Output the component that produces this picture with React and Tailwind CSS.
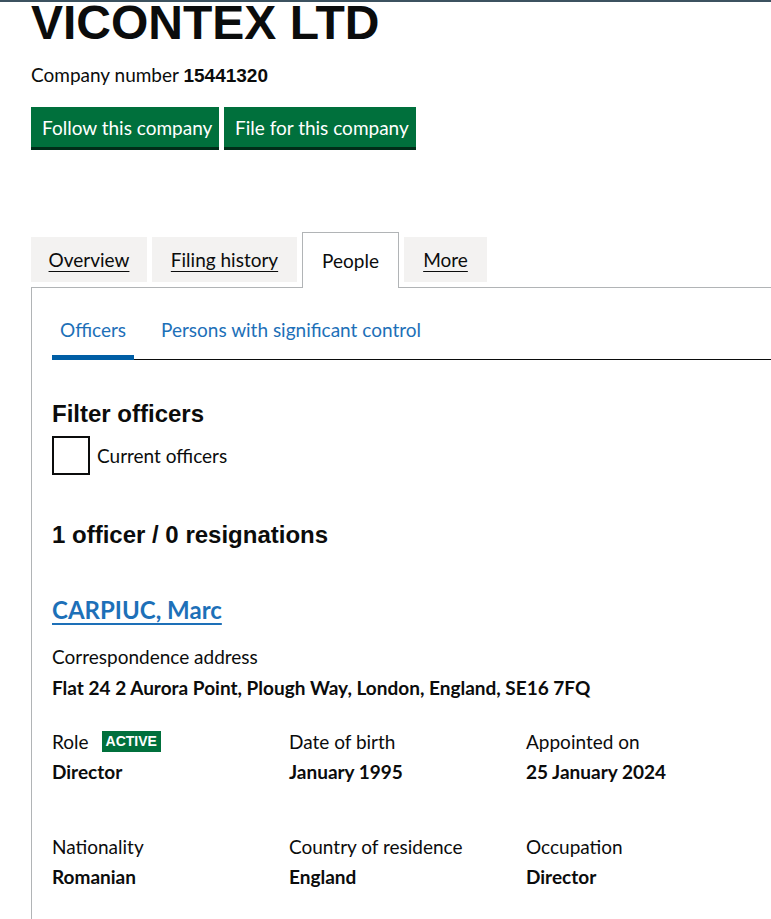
const body = { fontFamily: "Lato, 'Liberation Sans', sans-serif" };

const Field = ({ label, value, badge }) => (
  <div>
    <div className="flex items-center gap-[13px] text-[19px] leading-[25px]">
      <span>{label}</span>
      {badge && (
        <span className="bg-[#00703c] text-white font-bold text-[14px] leading-[21px] px-[4px] font-['Liberation_Sans',sans-serif]">
          {badge}
        </span>
      )}
    </div>
    <div className="mt-[5px] text-[19px] leading-[25px] font-bold">{value}</div>
  </div>
);

export default function App() {
  return (
    <div className="w-[771px] h-[919px] overflow-hidden bg-white text-[#0b0c0c]" style={body}>
      <div className="h-[2px] bg-[#3c5260]" />
      <div className="pl-[31px]">
        <h1 className="font-['Liberation_Sans',sans-serif] font-bold text-[48px] leading-[44px] -mt-[1px] whitespace-nowrap">
          VICONTEX LTD
        </h1>
        <p className="mt-[17px] text-[19px] leading-[25px]">
          Company number <strong className="font-['Liberation_Sans',sans-serif]">15441320</strong>
        </p>
        <div className="mt-[19px] flex gap-[5px]">
          <button className="bg-[#00703c] text-white text-[19px] leading-[25px] pl-[11px] pt-[8px] pb-[7px] shadow-[0_3px_0_#002d18] w-[188px] text-left whitespace-nowrap">
            Follow this company
          </button>
          <button className="bg-[#00703c] text-white text-[19px] leading-[25px] pl-[11px] pt-[8px] pb-[7px] shadow-[0_3px_0_#002d18] w-[192px] text-left whitespace-nowrap">
            File for this company
          </button>
        </div>

        <div className="mt-[85px] flex items-end gap-[5px] text-[19px] leading-[25px]">
          <div className="bg-[#f3f2f1] h-[45px] w-[116px] flex items-center justify-center mb-[5px]">
            <span className="underline underline-offset-[4px]">Overview</span>
          </div>
          <div className="bg-[#f3f2f1] h-[45px] w-[145px] flex items-center justify-center mb-[5px]">
            <span className="underline underline-offset-[4px]">Filing history</span>
          </div>
          <div className="bg-white h-[56px] w-[97px] border border-b-0 border-[#b1b4b6] flex items-center justify-center relative z-10 -mb-px pb-[1px]">
            <span>People</span>
          </div>
          <div className="bg-[#f3f2f1] h-[45px] w-[83px] flex items-center justify-center mb-[5px]">
            <span className="underline underline-offset-[4px]">More</span>
          </div>
        </div>

        <div className="border-l border-t border-[#b1b4b6] w-[900px] h-[700px] pl-[20px] pt-[29px]">
          <div className="flex border-b border-[#0b0c0c] text-[19px] leading-[25px] text-[#1d70b8]">
            <div className="px-[8px] pb-[17px] relative">
              Officers
              <div className="absolute left-0 right-0 bottom-[-1px] h-[5px] bg-[#005ea5]" />
            </div>
            <div className="ml-[27px] pb-[17px]">Persons with significant control</div>
          </div>

          <h2 className="mt-[39px] font-['Liberation_Sans',sans-serif] font-bold text-[24px] leading-[30px]">
            Filter officers
          </h2>
          <label className="mt-[7px] flex items-center gap-[7px] text-[19px] leading-[25px]">
            <span className="w-[38px] h-[39px] border-2 border-[#0b0c0c] block" />
            Current officers
          </label>

          <h2 className="mt-[45px] font-['Liberation_Sans',sans-serif] font-bold text-[24px] leading-[30px]">
            1 officer / 0 resignations
          </h2>

          <h2 className="mt-[45px] font-bold text-[24px] leading-[30px]">
            <a href="#" className="text-[#1d70b8] underline decoration-2 underline-offset-[4px]">
              CARPIUC, Marc
            </a>
          </h2>

          <div className="mt-[19px] text-[19px] leading-[25px]">Correspondence address</div>
          <div className="mt-[6px] text-[19px] leading-[25px] font-bold">
            Flat 24 2 Aurora Point, Plough Way, London, England, SE16 7FQ
          </div>

          <div className="mt-[29px] grid grid-cols-[237px_237px_237px]">
            <Field label="Role" value="Director" badge="ACTIVE" />
            <Field label="Date of birth" value="January 1995" />
            <Field label="Appointed on" value="25 January 2024" />
          </div>
          <div className="mt-[50px] grid grid-cols-[237px_237px_237px]">
            <Field label="Nationality" value="Romanian" />
            <Field label="Country of residence" value="England" />
            <Field label="Occupation" value="Director" />
          </div>
        </div>
      </div>
    </div>
  );
}
